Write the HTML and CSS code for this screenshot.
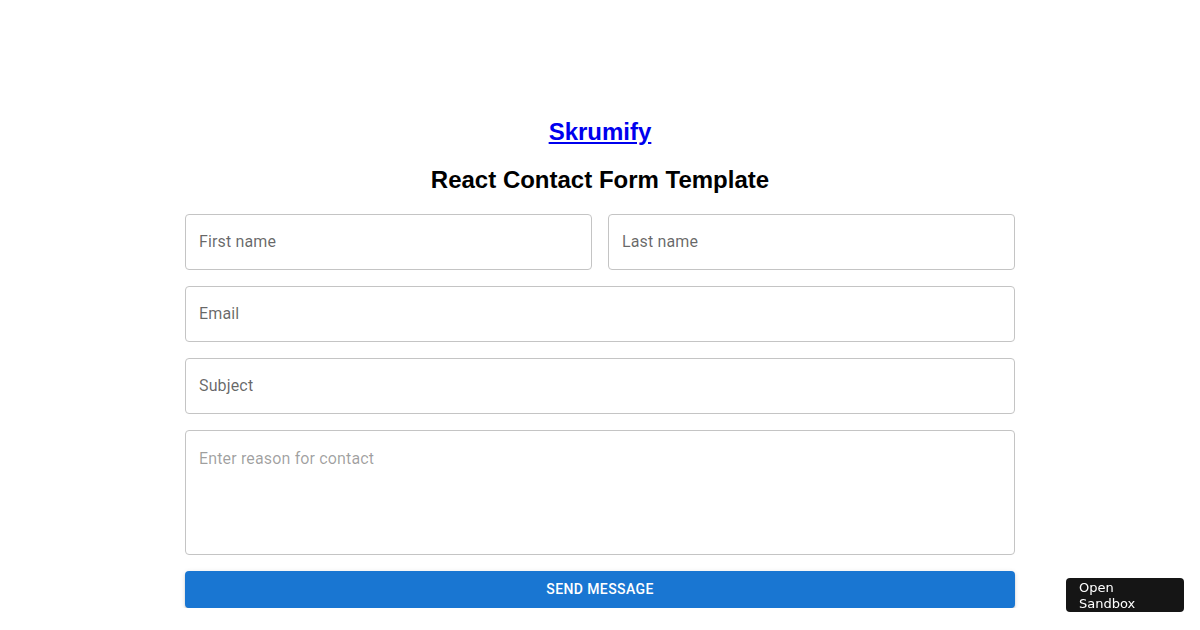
FILE: index.html
```html
<!DOCTYPE html>
<html lang="en">
<head>
<meta charset="utf-8">
<title>React Contact Form Template</title>
<link rel="stylesheet" href="styles.css">
</head>
<body>
<main class="page">
  <h2 class="brand"><a href="#">Skrumify</a></h2>
  <h2 class="title">React Contact Form Template</h2>
  <form class="form">
    <div class="row two">
      <input class="field" type="text" placeholder="First name">
      <input class="field" type="text" placeholder="Last name">
    </div>
    <input class="field" type="email" placeholder="Email">
    <input class="field" type="text" placeholder="Subject">
    <textarea class="field area" rows="4" placeholder="Enter reason for contact"></textarea>
    <button class="send" type="button">Send Message</button>
  </form>
</main>
<a class="sandbox" href="#">Open<br>Sandbox</a>
</body>
</html>
```
FILE: styles.css
```css
html, body {
  margin: 0;
  padding: 0;
  background: #ffffff;
}
body {
  font-family: "Liberation Sans", Arial, sans-serif;
}
.page {
  display: flex;
  flex-direction: column;
  align-items: center;
  padding-top: 118px;
}
.brand, .title {
  margin: 0;
  font-size: 24px;
  line-height: 28px;
  font-weight: 700;
  color: #000;
}
.brand {
  margin-bottom: 20px;
}
.brand a {
  color: #0000ee;
  text-decoration: underline;
}
.title {
  margin-bottom: 20px;
}
.form {
  width: 830px;
  display: flex;
  flex-direction: column;
  gap: 16px;
}
.row.two {
  display: grid;
  grid-template-columns: 1fr 1fr;
  gap: 16px;
}
.field {
  box-sizing: border-box;
  width: 100%;
  height: 56px;
  margin: 0;
  padding: 15.5px 14px 17.5px 13px;
  border: 1px solid #c4c4c4;
  border-radius: 4px;
  font-family: Roboto, "Noto Sans", sans-serif;
  font-size: 16px;
  line-height: 23px;
  letter-spacing: 0.15px;
  color: rgba(0, 0, 0, 0.87);
  background: #fff;
  outline: none;
}
.field::placeholder {
  color: rgba(0, 0, 0, 0.6);
  opacity: 1;
}
.area {
  height: 125px;
  resize: none;
  display: block;
}
.area::placeholder {
  color: rgba(0, 0, 0, 0.38);
}
.send {
  height: 36.5px;
  width: 100%;
  border: 0;
  border-radius: 4px;
  background: #1976d2;
  color: #fff;
  font-family: Roboto, "Noto Sans", sans-serif;
  font-weight: 500;
  font-size: 14px;
  letter-spacing: 0.4px;
  text-transform: uppercase;
  box-shadow: 0 3px 1px -2px rgba(0,0,0,0.2), 0 2px 2px 0 rgba(0,0,0,0.14), 0 1px 5px 0 rgba(0,0,0,0.12);
  cursor: pointer;
}
.sandbox {
  position: fixed;
  right: 16px;
  bottom: 18px;
  box-sizing: border-box;
  width: 118px;
  height: 34px;
  padding: 2px 13px 0;
  background: #151515;
  border-radius: 4px;
  color: #fff;
  text-decoration: none;
  font-family: "DejaVu Sans", sans-serif;
  font-size: 13px;
  line-height: 16px;
}
```
